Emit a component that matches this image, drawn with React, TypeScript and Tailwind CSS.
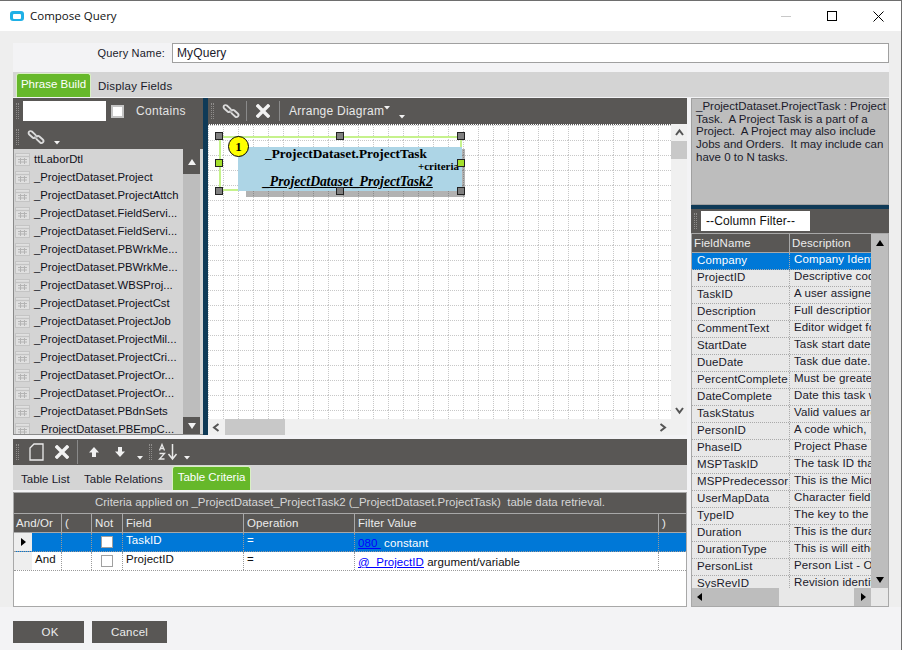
import React from "react";

const tables = [
  "ttLaborDtl",
  "_ProjectDataset.Project",
  "_ProjectDataset.ProjectAttch",
  "_ProjectDataset.FieldServi...",
  "_ProjectDataset.FieldServi...",
  "_ProjectDataset.PBWrkMe...",
  "_ProjectDataset.PBWrkMe...",
  "_ProjectDataset.WBSProj...",
  "_ProjectDataset.ProjectCst",
  "_ProjectDataset.ProjectJob",
  "_ProjectDataset.ProjectMil...",
  "_ProjectDataset.ProjectCri...",
  "_ProjectDataset.ProjectOr...",
  "_ProjectDataset.ProjectOr...",
  "_ProjectDataset.PBdnSets",
  "ProjectDataset.PBEmpC...",
];

const fields: [string, string][] = [
  ["Company", "Company Identifier"],
  ["ProjectID", "Descriptive code"],
  ["TaskID", "A user assigne."],
  ["Description", "Full description"],
  ["CommentText", "Editor widget for"],
  ["StartDate", "Task start date."],
  ["DueDate", "Task due date."],
  ["PercentComplete", "Must be greater"],
  ["DateComplete", "Date this task w"],
  ["TaskStatus", "Valid values are"],
  ["PersonID", "A code which,"],
  ["PhaseID", "Project Phase I"],
  ["MSPTaskID", "The task ID tha"],
  ["MSPPredecessor", "This is the Micr"],
  ["UserMapData", "Character field"],
  ["TypeID", "The key to the"],
  ["Duration", "This is the dura"],
  ["DurationType", "This is will eithe"],
  ["PersonList", "Person List - O."],
  ["SysRevID", "Revision identif"],
];

function Grip() {
  return <div className="w-[3px] h-[16px] shrink-0 border-x border-dotted border-[#8f8d8b]" />;
}

function LinkIcon() {
  return (
    <svg width="18" height="18" viewBox="0 0 18 18" fill="none" className="shrink-0">
      <rect x="1" y="4.5" width="8.5" height="4" rx="2" transform="rotate(42 5.2 6.5)" stroke="#dcdcdc" strokeWidth="1.8" />
      <rect x="8.5" y="9.5" width="8.5" height="4" rx="2" transform="rotate(42 12.8 11.5)" stroke="#dcdcdc" strokeWidth="1.8" />
      <path d="M7.5 8 L10.5 10.5" stroke="#9a9a9a" strokeWidth="1.2" />
    </svg>
  );
}

function CrossIcon() {
  return (
    <svg width="14" height="14" viewBox="0 0 14 14" className="shrink-0">
      <path d="M2 2 L12 12 M12 2 L2 12" stroke="#f2f2f2" strokeWidth="3.4" strokeLinecap="square" />
    </svg>
  );
}

function Caret() {
  return (
    <svg width="6" height="4" viewBox="0 0 6 4" className="shrink-0">
      <path d="M0 0 H6 L3 3.5 Z" fill="#f2f2f2" />
    </svg>
  );
}

function Tri({ dir, color = "#000", size = 8 }: { dir: "up" | "down" | "left" | "right"; color?: string; size?: number }) {
  const d = { up: "M0 7 L4 1 L8 7 Z", down: "M0 1 L8 1 L4 7 Z", left: "M6 0 V8 L1 4 Z", right: "M2 0 V8 L7 4 Z" }[dir];
  return (
    <svg width={size} height={size} viewBox="0 0 8 8">
      <path d={d} fill={color} />
    </svg>
  );
}

function Chevron({ dir }: { dir: "up" | "down" | "left" | "right" }) {
  const d = { up: "M1 7 L4.5 2.5 L8 7", down: "M1 2 L4.5 6.5 L8 2", left: "M6.5 1 L2 4.5 L6.5 8", right: "M2.5 1 L7 4.5 L2.5 8" }[dir];
  return (
    <svg width="9" height="9" viewBox="0 0 9 9" fill="none">
      <path d={d} stroke="#555" strokeWidth="2" />
    </svg>
  );
}

function TableIcon() {
  return (
    <svg width="15" height="13" viewBox="0 0 15 13" fill="none" className="shrink-0">
      <rect x="0.5" y="0.5" width="14" height="12" fill="#e0e0e0" stroke="#c4c4c4" />
      <path d="M0.5 3.5 H14.5" stroke="#c4c4c4" strokeWidth="1.4" />
      <path d="M3 6.5 H12 M3 9 H12 M5.5 5 V11 M9.5 5 V11" stroke="#b4b4b4" />
    </svg>
  );
}

function Handle({ x, y, lime }: { x: number; y: number; lime?: boolean }) {
  return (
    <div
      className={`absolute w-[8px] h-[8px] border border-[#222] ${lime ? "bg-[#a4e02c]" : "bg-[#808080]"}`}
      style={{ left: x, top: y }}
    />
  );
}

function Diagram() {
  return (
    <div className="relative flex-1 min-w-0 bg-white overflow-hidden border-t border-dotted border-[#555]">
      <svg className="absolute inset-0 w-full h-full">
        <defs>
          <pattern id="cgrid" x="0" y="0" width="15" height="15" patternUnits="userSpaceOnUse">
            <path d="M0 0.5 H15 M0.5 0 V15" stroke="#c8c8c8" strokeDasharray="1 1" />
          </pattern>
        </defs>
        <rect width="100%" height="100%" fill="url(#cgrid)" />
      </svg>
      {/* shadow */}
      <div className="absolute left-[38px] top-[24px] w-[219px] h-[48px] bg-black/30" />
      {/* selection */}
      <div className="absolute left-[11px] top-[11px] w-[243px] h-[55px] border-2 border-[#c6f28c]" />
      {/* node */}
      <div className="absolute left-[30px] top-[22px] w-[224px] h-[44px] bg-[#add5e6] font-['Liberation_Serif',serif] font-bold text-black">
        <div className="absolute left-[27px] top-[-1px] text-[13.3px] leading-[16px] whitespace-nowrap">_ProjectDataset.ProjectTask</div>
        <div className="absolute right-[3px] top-[12px] text-[11px] leading-[14px] whitespace-nowrap">+criteria</div>
        <div className="absolute left-[25px] top-[27px] text-[13.7px] leading-[16px] italic underline whitespace-nowrap">_ProjectDataset_ProjectTask2</div>
      </div>
      <Handle x={7} y={7} />
      <Handle x={128} y={7} />
      <Handle x={249} y={7} />
      <Handle x={7} y={34} lime />
      <Handle x={249} y={34} lime />
      <Handle x={7} y={62} />
      <Handle x={128} y={62} />
      <Handle x={249} y={62} />
      <div className="absolute left-[20px] top-[11px] w-[21px] h-[21px] rounded-full bg-[#ffff00] border border-black flex items-center justify-center font-['Liberation_Serif',serif] font-bold text-[13px] leading-none text-black">
        1
      </div>
    </div>
  );
}

const colsCriteria = "grid grid-cols-[48px_30px_31px_121px_111px_304px_27px]";

export default function App() {
  return (
    <div className="w-[902px] h-[650px] flex flex-col overflow-hidden bg-[#eeeeee] border-t border-r border-[#6e6e6e] font-['Liberation_Sans',Arial,sans-serif] text-[12px] text-[#1a1a1a]">
      {/* Title bar */}
      <div className="h-[30px] shrink-0 bg-white flex items-center pl-[10px]">
        <div className="w-[14px] h-[10px] rounded-[3px] bg-[#1fb0e6] flex items-center justify-center">
          <div className="w-[8px] h-[5px] rounded-[1px] bg-white" />
        </div>
        <span className="ml-[6px] font-['Open_Sans',sans-serif] text-[11.5px] text-[#111]">Compose Query</span>
        <div className="ml-auto flex items-center h-full">
          <div className="w-[46px] flex justify-center"><div className="w-[10px] h-px bg-[#c8c8c8]" /></div>
          <div className="w-[46px] flex justify-center"><div className="w-[10px] h-[10px] border border-black" /></div>
          <div className="w-[46px] flex justify-center">
            <svg width="11" height="11" viewBox="0 0 11 11"><path d="M0.5 0.5 L10.5 10.5 M10.5 0.5 L0.5 10.5" stroke="#000" /></svg>
          </div>
        </div>
      </div>

      {/* Body */}
      <div className="h-[12px] shrink-0" />
      <div className="flex-1 min-h-0 flex flex-col">
        <div className="ml-[13px] mr-[12px] w-[876px] h-[564px] shrink-0 bg-[#f3f3f5] flex flex-col">
          {/* Query name */}
          <div className="h-[29px] shrink-0 flex items-start">
            <div className="w-[152px] text-right pt-[3px] text-[#1a1a2a] tracking-[0.2px] leading-[14px] text-[11px] whitespace-nowrap">Query Name:</div>
            <div className="ml-[7px] w-[717px] h-[20px] bg-white border border-[#a0a0a0] pl-[4px] leading-[18px] text-[#1a1a2a] tracking-[0.1px]">MyQuery</div>
          </div>
          {/* Tabs */}
          <div className="h-[25px] shrink-0 bg-[#d4d4d4] flex items-end pl-[3px] text-[11.5px]">
            <div className="h-[24px] w-[75px] bg-[#66b82a] text-white text-center leading-[21px] rounded-t-[3px] border border-b-0 border-[#d9f0c4]">Phrase Build</div>
            <div className="ml-[7px] h-[23px] leading-[25px] text-[#1a1a2a] tracking-[0.2px]">Display Fields</div>
          </div>

          {/* Middle */}
          <div className="flex-1 min-h-0 flex pt-px">
            {/* Left + bottom */}
            <div className="w-[674px] shrink-0 flex flex-col">
              <div className="h-[337px] shrink-0 flex">
                {/* Table list */}
                <div className="w-[190px] shrink-0 flex flex-col">
                  <div className="h-[26px] shrink-0 bg-[#595755] flex items-center pl-[3px]">
                    <Grip />
                    <div className="ml-[4px] w-[83px] h-[20px] bg-white" />
                    <div className="ml-[5px] w-[13px] h-[13px] bg-white border-2 border-[#c4c4c4]" />
                    <span className="ml-[12px] text-[#e4e4e4] tracking-[0.3px]">Contains</span>
                  </div>
                  <div className="h-[25px] shrink-0 bg-[#595755] flex items-center pl-[3px]">
                    <Grip />
                    <div className="ml-[8px]"><LinkIcon /></div>
                    <div className="ml-[9px] mt-[12px]"><Caret /></div>
                  </div>
                  <div className="flex-1 min-h-0 flex border-l border-b border-[#8a8a8a] bg-[#d4d4d4]">
                    <div className="flex-1 min-w-0 overflow-hidden text-[11.3px] pt-[1px]">
                      {tables.map((t, i) => (
                        <div key={i} className="h-[18px] flex items-center pl-[1px] gap-[4px] whitespace-nowrap text-[#10101a]">
                          <TableIcon />
                          <span className={`mt-[1px] ${i === 15 ? "pl-[7px]" : ""}`}>{t}</span>
                        </div>
                      ))}
                    </div>
                    <div className="w-[17px] shrink-0 flex flex-col bg-[#bdbdbd]">
                      <div className="h-[25px] bg-[#595755] flex items-center justify-center"><Tri dir="up" color="#f2f2f2" /></div>
                      <div className="flex-1" />
                      <div className="h-[17px] bg-[#595755] flex items-center justify-center"><Tri dir="down" color="#f2f2f2" /></div>
                    </div>
                    <div className="w-[3px] shrink-0 bg-[#d4d4d4]" />
                  </div>
                </div>
                {/* Splitter */}
                <div className="w-[5px] shrink-0 bg-[#0f3a57]" />
                {/* Diagram */}
                <div className="flex-1 min-w-0 flex flex-col">
                  <div className="h-[26px] shrink-0 bg-[#595755] flex items-center text-[#e8e8e8]">
                    <div className="ml-[3px]"><Grip /></div>
                    <div className="ml-[8px]"><LinkIcon /></div>
                    <div className="ml-[6px] w-px h-[20px] bg-[#8a8a8a]" />
                    <div className="ml-[9px]"><CrossIcon /></div>
                    <div className="ml-[9px] w-px h-[20px] bg-[#8a8a8a]" />
                    <span className="ml-[9px] text-[12px] tracking-[0.25px]">Arrange Diagram</span>
                    <div className="mb-[6px]"><Caret /></div>
                    <div className="ml-[9px] mt-[12px]"><Caret /></div>
                  </div>
                  <div className="flex-1 min-h-0 flex flex-col">
                    <div className="flex-1 min-h-0 flex">
                      <Diagram />
                      <div className="w-[16px] shrink-0 bg-[#f0f0f0] flex flex-col">
                        <div className="h-[17px] flex items-center justify-center"><Chevron dir="up" /></div>
                        <div className="h-[18px] bg-[#c8c8c8]" />
                        <div className="flex-1" />
                        <div className="h-[17px] flex items-center justify-center"><Chevron dir="down" /></div>
                      </div>
                    </div>
                    <div className="h-[16px] shrink-0 flex bg-[#f0f0f0]">
                      <div className="w-[17px] flex items-center justify-center"><Chevron dir="left" /></div>
                      <div className="w-[60px] bg-[#c8c8c8]" />
                      <div className="flex-1" />
                      <div className="w-[17px] flex items-center justify-center"><Chevron dir="right" /></div>
                      <div className="w-[16px]" />
                    </div>
                  </div>
                </div>
              </div>

              {/* Bottom toolbar */}
              <div className="mt-[4px] h-[26px] shrink-0 bg-[#595755] flex items-center text-white">
                <div className="ml-[3px]"><Grip /></div>
                <svg width="15" height="18" viewBox="0 0 15 18" fill="none" className="ml-[10px]">
                  <path d="M1 5 L5 1 H14 V17 H1 Z" stroke="#ececec" strokeWidth="1.3" />
                </svg>
                <div className="ml-[11px]"><CrossIcon /></div>
                <div className="ml-[8px] w-px h-[24px] bg-[#8a8a8a]" />
                <svg width="12" height="12" viewBox="0 0 12 12" className="ml-[10px]"><path d="M6 1 L11 6.5 H8 V11 H4 V6.5 H1 Z" fill="#f0f0f0" /></svg>
                <svg width="12" height="12" viewBox="0 0 12 12" className="ml-[14px]"><path d="M6 11 L11 5.5 H8 V1 H4 V5.5 H1 Z" fill="#f0f0f0" /></svg>
                <div className="ml-[11px] mt-[12px]"><Caret /></div>
                <div className="ml-[6px]"><Grip /></div>
                <svg width="20" height="18" viewBox="0 0 20 18" fill="none" className="ml-[6px]">
                  <path d="M14.5 1 V15 M10.5 11 L14.5 16 L18.5 11" stroke="#e8e8e8" strokeWidth="1.5" />
                  <path d="M1.5 7.5 L4 1.5 L6.5 7.5 M2.5 5.5 H5.5 M1.5 10.5 H6.5 L1.5 16 H6.5" stroke="#e8e8e8" strokeWidth="1.3" />
                </svg>
                <div className="ml-[6px] mt-[12px]"><Caret /></div>
              </div>

              {/* Bottom tabs */}
              <div className="h-[25px] shrink-0 bg-[#d4d4d4] flex items-end text-[11.5px] text-[#1a1a2a]">
                <div className="ml-[8px] w-[63px] h-[23px] leading-[25px] whitespace-nowrap">Table List</div>
                <div className="w-[88px] h-[23px] leading-[25px] whitespace-nowrap">Table Relations</div>
                <div className="h-[24px] w-[79px] bg-[#66b82a] text-white text-center leading-[20px] rounded-t-[3px] border border-b-0 border-[#d9f0c4]">Table Criteria</div>
              </div>

              {/* Criteria */}
              <div className="mt-[2px] h-[115px] shrink-0 w-[674px] border border-[#a8a8a8] bg-white flex flex-col text-[11.5px]">
                <div className="h-[20px] shrink-0 bg-[#595755] text-[#d6d6d6] text-center leading-[19px] whitespace-pre">
                  Criteria applied on _ProjectDataset_ProjectTask2 (_ProjectDataset.ProjectTask)  table data retrieval.
                </div>
                <div className={`${colsCriteria} h-[20px] shrink-0 bg-[#595755] text-[#ececec] leading-[19px] tracking-[0.1px] border-y border-[#a8a8a8]`}>
                  {["And/Or", "(", "Not", "Field", "Operation", "Filter Value", ")"].map((h, i) => (
                    <div key={i} className={`${i === 0 ? "pl-[2px]" : "pl-[3px]"} border-r border-[#a8a8a8] last:border-r-0`}>{h}</div>
                  ))}
                </div>
                <div className={`${colsCriteria} h-[19px] shrink-0 bg-[#0078d7] text-white leading-[14px] tracking-[0.1px] border-b border-dotted border-[#9a9a9a]`}>
                  <div className="relative border-r border-dotted border-[#9a9a9a]">
                    <div className="w-[18px] h-full bg-[#eeeeee] flex items-center justify-center"><Tri dir="right" /></div>
                  </div>
                  <div className="border-r border-dotted border-[#9a9a9a]" />
                  <div className="border-r border-dotted border-[#9a9a9a] flex justify-center items-center"><div className="w-[12px] h-[12px] bg-white border border-[#a0a0a0]" /></div>
                  <div className="pl-[3px] border-r border-dotted border-[#9a9a9a]">TaskID</div>
                  <div className="pl-[3px] border-r border-dotted border-[#9a9a9a]">=</div>
                  <div className="pl-[3px] pt-[3px] border-r border-dotted border-[#9a9a9a] whitespace-pre"><span className="text-[#0000ff] underline">080 </span> constant</div>
                  <div />
                </div>
                <div className={`${colsCriteria} h-[19px] shrink-0 text-[#111] leading-[14px] tracking-[0.05px] border-b border-dotted border-[#9a9a9a]`}>
                  <div className="flex border-r border-dotted border-[#9a9a9a]">
                    <div className="w-[18px] h-full bg-[#eeeeee]" />
                    <span className="pl-[3px]">And</span>
                  </div>
                  <div className="border-r border-dotted border-[#9a9a9a]" />
                  <div className="border-r border-dotted border-[#9a9a9a] flex justify-center items-center"><div className="w-[12px] h-[12px] bg-white border border-[#a0a0a0]" /></div>
                  <div className="pl-[3px] border-r border-dotted border-[#9a9a9a]">ProjectID</div>
                  <div className="pl-[3px] border-r border-dotted border-[#9a9a9a]">=</div>
                  <div className="pl-[3px] pt-[3px] border-r border-dotted border-[#9a9a9a] whitespace-pre"><span className="text-[#0000ff] underline">@_ProjectID</span> argument/variable</div>
                  <div />
                </div>
              </div>
            </div>

            {/* Right column */}
            <div className="ml-[4px] w-[198px] shrink-0 flex flex-col">
              <div className="h-[107px] shrink-0 bg-[#bdbdbd] border border-[#a0a0a0] pl-[4px] pr-px pt-[1px] text-[11.5px] leading-[12.7px] text-[#1a1a2a] whitespace-pre-wrap">
                {"_ProjectDataset.ProjectTask : Project Task.  A Project Task is a part of a Project.  A Project may also include Jobs and Orders.  It may include can have 0 to N tasks."}
              </div>
              <div className="h-[4px] shrink-0 bg-[#0f3a57]" />
              <div className="h-[24px] shrink-0 bg-[#595755] flex items-center pl-[3px]">
                <Grip />
                <div className="ml-[4px] w-[109px] h-[20px] bg-white text-[#111] pl-[5px] leading-[20px] tracking-[0.1px]">--Column Filter--</div>
              </div>
              <div className="flex-1 min-h-0 border border-[#a8a8a8] bg-[#e8e8e8] flex flex-col text-[11.5px] tracking-[0.12px]">
                <div className="flex-1 min-h-0 flex">
                  <div className="flex-1 min-w-0 flex flex-col overflow-hidden">
                    <div className="grid grid-cols-[98px_82px] h-[19px] shrink-0 bg-[#595755] text-[#ececec] leading-[18px] border-b border-[#a8a8a8]">
                      <div className="pl-[2px] border-r border-[#a8a8a8]">FieldName</div>
                      <div className="pl-[2px]">Description</div>
                    </div>
                    {fields.map(([a, b], i) => (
                      <div key={a} className={`grid grid-cols-[98px_82px] h-[17px] shrink-0 whitespace-nowrap border-b border-dotted border-[#aaaaaa] ${i === 0 ? "bg-[#0078d7] text-white" : "text-[#1a1a2a]"}`}>
                        <div className="pl-[5px] border-r border-dotted border-[#aaaaaa] leading-[15px]">{a}</div>
                        <div className="pl-[4px] overflow-hidden leading-[13px]">{b}</div>
                      </div>
                    ))}
                  </div>
                  <div className="w-[17px] shrink-0 flex flex-col bg-[#bdbdbd]">
                    <div className="h-[17px] flex items-center justify-center"><Tri dir="up" /></div>
                    <div className="flex-1" />
                    <div className="h-[17px] flex items-center justify-center"><Tri dir="down" /></div>
                  </div>
                </div>
                <div className="h-[18px] shrink-0 flex">
                  <div className="w-[87px] bg-[#bdbdbd] flex items-center pl-[4px]"><Tri dir="left" /></div>
                  <div className="flex-1" />
                  <div className="w-[17px] bg-[#bdbdbd] flex items-center justify-center"><Tri dir="right" /></div>
                  <div className="w-[17px]" />
                </div>
              </div>
            </div>
          </div>
        </div>
        {/* Footer */}
        <div className="flex-1 bg-[#f3f3f5] flex items-start pl-[13px] pt-[14px] gap-[8px] text-[#ececec] tracking-[0.2px] text-[11.5px]">
          <div className="w-[71px] h-[22px] bg-[#595755] text-center pl-[3px] leading-[22px]">OK</div>
          <div className="w-[75px] h-[22px] bg-[#595755] text-center leading-[22px]">Cancel</div>
        </div>
      </div>
    </div>
  );
}
